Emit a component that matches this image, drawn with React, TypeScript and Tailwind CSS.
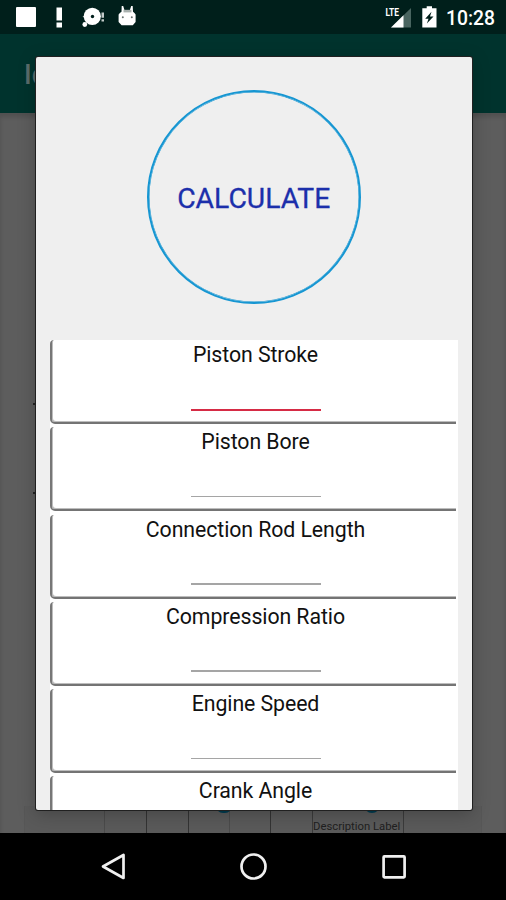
const fields = [
  'Piston Stroke',
  'Piston Bore',
  'Connection Rod Length',
  'Compression Ratio',
  'Engine Speed',
  'Crank Angle',
];

function StatusBar() {
  return (
    <header className="flex h-[34px] shrink-0 items-start justify-between bg-[#001f1b] text-white">
      <svg width="150" height="34" viewBox="0 0 150 34" fill="white">
        <rect x="16" y="7" width="20" height="20" rx="1" />
        <path d="M56.5 7.5h5.500v13h-5.500zM56.5 22.5h5.500v5h-5.500z" />
        <circle cx="92.300" cy="16.300" r="8.600" />
        <circle cx="84.800" cy="24.500" r="2.400" />
        <path d="M82.500 16.800l3.500-1.200v2.700z" />
        <circle cx="92.500" cy="16.500" r="1.700" fill="#001f1b" />
        <path d="M101.500 12.500h2.500v5.300h-2.500zM101.500 19.200h2.500v2.400h-2.500z" fill="#c3cbca" />
        <path d="M121.700 6h1.500l1.300 4.200h5.300L131.200 6h1.500l.3 5.800a8 8 0 0 1 2.600 2.800v7.300l-2.800 3.300h-11.200l-3-3.300v-7.300a8 8 0 0 1 2.900-2.900z" />
        <path d="M123.500 9.800h8v2.600h-8z" fill="#a9b1af" />
        <circle cx="122.8" cy="17.2" r="1" fill="#66716f" />
        <circle cx="131.8" cy="17.2" r="1" fill="#66716f" />
      </svg>
      <div className="flex h-full">
        <svg width="60" height="34" viewBox="0 0 60 34" fill="white">
          <path d="M30 8v19.500H10z" fill="#496560" />
          <path d="M22.500 15.300v12.200H10z" />
          <text x="4.500" y="16" fontFamily="Roboto, sans-serif" fontSize="11.500" fontWeight="700" textLength="13.500" lengthAdjust="spacingAndGlyphs">
            LTE
          </text>
          <path d="M45.700 6.200h5.300v2.100h4.500v19.200H41.300V8.300h4.400z" />
          <path d="M50.500 11.800l-6.300 7h3.300l-1.600 4.800 6.600-7h-3.500z" fill="#001f1b" />
        </svg>
        <span className="w-[65px] pl-[5px] pt-[7px] font-[Roboto,sans-serif] text-[19.300px] font-medium leading-[24px]">
          10:28
        </span>
      </div>
    </header>
  );
}

function Background() {
  return (
    <main className="flex h-[720px] shrink-0 flex-col justify-end bg-[#5d5d5d] shadow-[inset_0_4px_4px_rgba(0,0,0,0.14)]">
      <div className="mb-[312px] flex h-[91px] justify-between px-[33px]">
        <div className="w-[3px] border-y-2 border-[#222]" />
        <div className="w-[3px] border-y-2 border-[#222]" />
      </div>
      <div className="mx-6 flex h-[27px] border-x border-[#575757] bg-[#5a5a5a] pl-[79px]">
        <div className="w-[42px] border-l border-[#4b4b4b]" />
        <div className="w-[42px] border-l border-[#333]" />
        <div className="w-[41px] border-l border-[#333]" />
        <div className="w-[41px] border-l border-[#4b4b4b]">
          <div className="-ml-3.5 h-[7px] w-4 rounded-b-full bg-[#003c50]" />
        </div>
        <div className="w-[42px] border-l border-[#333]" />
        <div className="relative w-[92px] border-x border-[#3b3b3b] pt-[15px]">
          <div className="absolute left-[51px] -top-[5px] h-3 w-4 rounded-b-full bg-[#003c50]" />
          <span className="block whitespace-nowrap font-[Roboto,sans-serif] text-[11.300px] leading-[12px] text-[#202020]">
            Description Label
          </span>
        </div>
      </div>
    </main>
  );
}

function Field({ label, active }: { label: string; active: boolean }) {
  return (
    <div className="h-[87.200px] shrink-0 bg-white pr-[1.500px]">
      <div className="flex h-[84px] flex-col items-center rounded-bl-[5px] rounded-tl-[4px] border-b-2 border-l-2 border-b-[#747474] border-l-[#777] pl-[3px] shadow-[inset_1px_-1px_0_#bdbdbd]">
        <span className="mt-0.5 text-[21.300px] leading-[25px] tracking-[-0.080px] text-[#111]">{label}</span>
        <div className={active ? 'mt-[41.500px] h-[2.500px] w-[130px] bg-[#d62b45]' : 'mt-[41.500px] h-[1.500px] w-[130px] bg-[#a5a5a5]'} />
      </div>
    </div>
  );
}

function Dialog() {
  return (
    <section className="absolute left-[36px] top-[57px] flex h-[753px] w-[435.500px] flex-col overflow-hidden rounded-[2px] bg-[#efefef] font-[Roboto,sans-serif] shadow-[0_0_0_1px_#202020,0_4px_18px_rgba(0,0,0,0.25)]">
      <div className="flex h-[283.300px] shrink-0 items-start justify-center pt-[33px]">
        <button className="flex size-[214px] items-center justify-center rounded-full border-2 border-[#1696d2] pt-1 text-[28.300px] text-[#1c2fab] shadow-[inset_0_0_0_0.500px_#1696d2] [-webkit-text-stroke:0.300px_#1c2fab]">
          CALCULATE
        </button>
      </div>
      <div className="ml-[14px] mr-[14px] flex flex-col">
        {fields.map((label, index) => (
          <Field key={label} label={label} active={index === 0} />
        ))}
      </div>
    </section>
  );
}

export default function App() {
  return (
    <div className="relative flex h-[900px] w-[506px] flex-col overflow-hidden bg-black">
      <StatusBar />
      <div className="h-[79px] shrink-0 bg-[#00332d] pl-6 pt-[24px] font-[Roboto,sans-serif] text-[27px] font-medium leading-[34px] text-[#5b6d6b]">
        Id
      </div>
      <Background />
      <Dialog />
      <nav className="flex h-[67px] shrink-0 items-center bg-black">
        <svg width="506" height="67" viewBox="0 0 506 67" fill="none" stroke="#f0f0f0" strokeWidth="2.700" strokeLinejoin="round">
          <path d="M123.500 22v23l-20.500-11.500z" />
          <circle cx="253.500" cy="33.500" r="12" />
          <rect x="383.600" y="23.400" width="21" height="21" rx="0.800" />
        </svg>
      </nav>
    </div>
  );
}
